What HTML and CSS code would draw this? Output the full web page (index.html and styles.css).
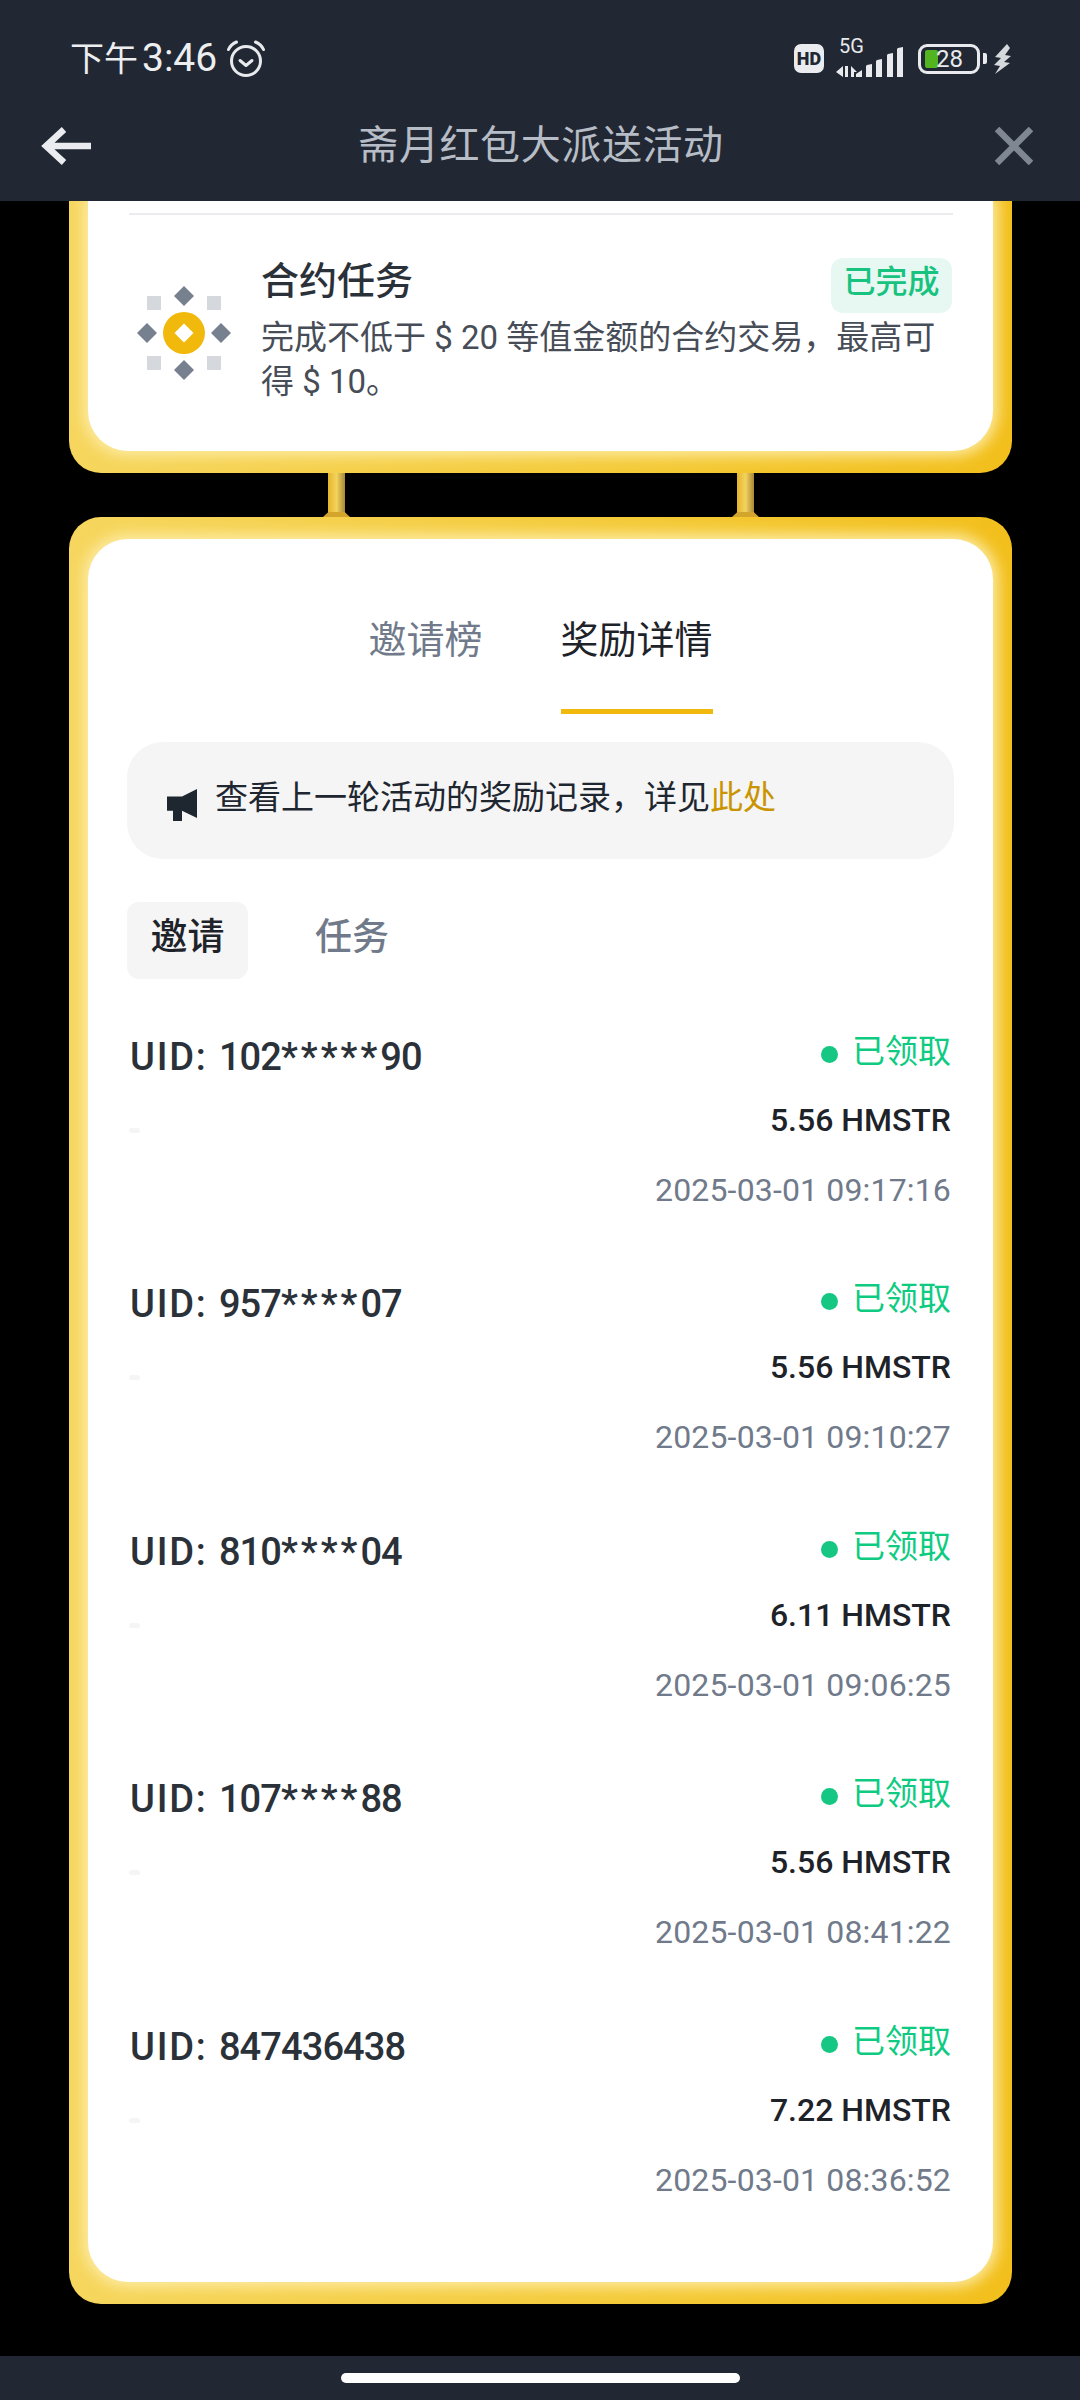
FILE: index.html
```html
<!DOCTYPE html>
<html lang="zh-CN">
<head>
<meta charset="utf-8">
<title>斋月红包大派送活动</title>
<link rel="stylesheet" href="styles.css">
</head>
<body>
<div class="page">
  <header class="header">
    <div class="status">
      <div class="status-left">
        <span class="clock"><span class="clock-cjk">下午</span>3:46</span>
        <svg class="alarm" viewBox="0 0 38 38" fill="none" stroke="#e8eaed">
          <circle cx="19" cy="21" r="14.5" stroke-width="3"/>
          <path d="M13 20.5l6 5 6-5" stroke-width="3" stroke-linecap="round" stroke-linejoin="round"/>
          <path d="M1.5 9.5C3 6 6 3.500 9.500 2M36.500 9.500C35 6 32 3.500 28.500 2" stroke-width="3" stroke-linecap="round"/>
        </svg>
      </div>
      <div class="status-right">
        <span class="hd">HD</span>
        <div class="net">
          <span class="fiveg">5G</span>
          <svg class="signal" viewBox="0 0 68 30" fill="#e8eaed">
            <path d="M0 25l7-6v11zM9 19h3v11H9zM15 19l6 6h-3v5h-3z"/>
            <path d="M20 30v-3l6-4v7zM30 30V19l1-1 5-1v13zM40 30V14l1-1 5-1v18zM51 30V8l1-1 5-1v24zM61 30V2l1-1 5-1v30z"/>
          </svg>
        </div>
        <div class="battery">
          <span class="battery-fill"></span>
          <span class="battery-num">28</span>
        </div>
        <span class="battery-nub"></span>
        <svg class="bolt" viewBox="0 0 18 30" fill="#d5d8dc">
          <path d="M13 0L1 13l6 1-7 7 6 1-5 8 15-11-6-1 7-6-6-1 5-7z"/>
        </svg>
      </div>
    </div>
    <nav class="nav">
      <svg class="back" viewBox="0 0 50 38" fill="none" stroke="#eaecef" stroke-width="6.500">
        <path d="M23 2.500L5 19l18 16.500M5 19h45"/>
      </svg>
      <h1 class="title">斋月红包大派送活动</h1>
      <svg class="close" viewBox="0 0 38 38" fill="none" stroke="#7f8792" stroke-width="6.500">
        <path d="M2 2l34 34M36 2L2 36"/>
      </svg>
    </nav>
  </header>

  <section class="frame frame-top">
    <div class="sheet sheet-top">
      <div class="divider"></div>
      <div class="task">
        <svg class="task-icon" viewBox="0 0 94 94">
          <g fill="#d5d8dc">
            <rect x="10" y="10" width="14" height="14"/>
            <rect x="70" y="10" width="14" height="14"/>
            <rect x="10" y="70" width="14" height="14"/>
            <rect x="70" y="70" width="14" height="14"/>
          </g>
          <g fill="#76808f">
            <path d="M47 0l10 10-10 10-10-10z"/>
            <path d="M47 74l10 10-10 10-10-10z"/>
            <path d="M10 37l10 10-10 10L0 47z"/>
            <path d="M84 37l10 10-10 10-10-10z"/>
          </g>
          <circle cx="47" cy="47" r="21" fill="#f0b90b"/>
          <path d="M47 37.500l9.500 9.500-9.500 9.500-9.500-9.500z" fill="#fff"/>
        </svg>
        <div class="task-body">
          <h2 class="task-title">合约任务</h2>
          <p class="task-desc">完成不低于 $ 20 等值金额的合约交易，最高可<br>得 $ 10。</p>
        </div>
        <span class="badge">已完成</span>
      </div>
    </div>
  </section>

  <div class="poles">
    <span class="pole"></span>
    <span class="pole"></span>
  </div>

  <section class="frame frame-main">
    <div class="sheet sheet-main">
      <div class="tabs">
        <span class="tab">邀请榜</span>
        <span class="tab tab-on">奖励详情</span>
      </div>
      <div class="notice">
        <svg class="horn" viewBox="0 0 30 32" fill="#1e2630">
          <path d="M0 7.500h15L30 0v29L15 21.700V32H6V21.700H0z"/>
        </svg>
        <span class="notice-text">查看上一轮活动的奖励记录，详见<a class="link">此处</a></span>
      </div>
      <div class="subtabs">
        <span class="subtab subtab-on">邀请</span>
        <span class="subtab">任务</span>
      </div>
      <ul class="rows">
        <li class="row">
          <div class="row-left"><span class="uid"><span class="uid-key">UID: </span>102<span class="mask">*****</span>90</span><span class="dash"></span></div>
          <div class="row-right"><span class="state">已领取</span><span class="amount">5.56 HMSTR</span><span class="date">2025-03-01 09:17:16</span></div>
        </li>
        <li class="row">
          <div class="row-left"><span class="uid"><span class="uid-key">UID: </span>957<span class="mask">****</span>07</span><span class="dash"></span></div>
          <div class="row-right"><span class="state">已领取</span><span class="amount">5.56 HMSTR</span><span class="date">2025-03-01 09:10:27</span></div>
        </li>
        <li class="row">
          <div class="row-left"><span class="uid"><span class="uid-key">UID: </span>810<span class="mask">****</span>04</span><span class="dash"></span></div>
          <div class="row-right"><span class="state">已领取</span><span class="amount">6.11 HMSTR</span><span class="date">2025-03-01 09:06:25</span></div>
        </li>
        <li class="row">
          <div class="row-left"><span class="uid"><span class="uid-key">UID: </span>107<span class="mask">****</span>88</span><span class="dash"></span></div>
          <div class="row-right"><span class="state">已领取</span><span class="amount">5.56 HMSTR</span><span class="date">2025-03-01 08:41:22</span></div>
        </li>
        <li class="row">
          <div class="row-left"><span class="uid"><span class="uid-key">UID: </span>847436438</span><span class="dash"></span></div>
          <div class="row-right"><span class="state">已领取</span><span class="amount">7.22 HMSTR</span><span class="date">2025-03-01 08:36:52</span></div>
        </li>
      </ul>
    </div>
  </section>

  <div class="spacer"></div>
  <footer class="homebar"><span class="indicator"></span></footer>
</div>
</body>
</html>
```

FILE: styles.css
```css
* { box-sizing: border-box; }
html, body { margin: 0; padding: 0; background: #000; }
body { font-family: Roboto, "Noto Sans CJK SC", sans-serif; color: #1e2329; }
h1, h2, p, ul { margin: 0; padding: 0; font-weight: inherit; font-size: inherit; }
ul { list-style: none; }

.page { width: 1080px; height: 2400px; display: flex; flex-direction: column; overflow: hidden; }

/* header */
.header { height: 201px; flex: none; background: #212833; display: flex; flex-direction: column; }
.status { height: 91px; padding: 26px 68px 0 70px; display: flex; justify-content: space-between; align-items: center; }
.status-left { display: flex; align-items: center; gap: 9px; }
.clock { font-size: 39px; line-height: 42px; color: #eceef0; }
.clock-cjk { font-size: 34px; margin-right: 4px; }
.alarm { width: 40px; height: 38px; }
.status-right { display: flex; align-items: center; }
.hd { width: 30px; height: 29px; border-radius: 7px; background: #eaecef; color: #212833; font-size: 18px; font-weight: 900; line-height: 29px; text-align: center; margin-right: 12px; }
.net { width: 68px; height: 36px; position: relative; margin-right: 14px; }
.fiveg { position: absolute; left: 3px; top: -6px; font-size: 20px; line-height: 22px; color: #e8eaed; }
.signal { position: absolute; left: 0; bottom: 0; width: 68px; height: 30px; }
.battery { width: 62px; height: 30px; border: 3px solid #e8eaed; border-radius: 9px; position: relative; }
.battery-fill { position: absolute; left: 4px; top: 3px; width: 13px; height: 18px; background: #52b51f; border-radius: 2px; }
.battery-num { position: absolute; left: 15px; top: 0; font-size: 24px; line-height: 24px; color: #e8eaed; }
.battery-nub { width: 4px; height: 11px; border-radius: 0 2px 2px 0; background: #e8eaed; margin-left: 3px; }
.bolt { width: 18px; height: 30px; margin-left: 7px; }
.nav { height: 110px; padding: 0 47px 0 41px; display: flex; align-items: center; }
.back { width: 50px; height: 38px; flex: none; }
.close { width: 38px; height: 38px; flex: none; }
.title { flex: 1; text-align: center; font-size: 40px; letter-spacing: 0.6px; line-height: 56px; color: #b7bdc6; padding-right: 4px; }

/* yellow frames */
.frame { margin: 0 68px 0 69px; padding: 22px 19px; background: linear-gradient(90deg, #f6d65e 0%, #f4ca38 60%, #f2bf1c 100%); border-radius: 32px; overflow: hidden; flex: none; }
.sheet { background: #fff; box-shadow: 0 0 14px 5px #fdeba4; border-radius: 40px; }
.frame-top { height: 272px; padding-top: 0; border-radius: 0 0 32px 32px; }
.sheet-top { height: 250px; padding: 12px 40px 0 37px; border-radius: 0 0 40px 40px; }
.divider { height: 2px; background: #eaecef; margin-left: 4px; }
.frame-main { height: 1787px; }
.sheet-main { height: 1743px; padding: 62px 39px 0; }

/* task */
.task { display: flex; align-items: flex-start; margin-top: 41px; position: relative; }
.task-icon { width: 94px; height: 94px; flex: none; margin: 30px 0 0 12px; }
.task-body { margin-left: 30px; }
.task-title { font-size: 38px; font-weight: 500; line-height: 50px; color: #2b3139; }
.task-desc { font-size: 33px; line-height: 44px; color: #474d57; margin-top: 10px; white-space: nowrap; }
.badge { position: absolute; right: 1px; top: 2px; width: 121px; height: 55px; border-radius: 12px; background: #e7f8f2; color: #18c27f; font-size: 32px; font-weight: 500; line-height: 48px; text-align: center; }

/* poles */
.poles { height: 44px; flex: none; padding-left: 328px; display: flex; gap: 392px; }
.pole { width: 17px; height: 44px; background: linear-gradient(90deg, #e6b52c 0%, #f3d35c 50%, #a98738 100%); position: relative; }
.pole::after { content: ""; position: absolute; left: -5px; bottom: 0; width: 27px; height: 5px; background: #d4a52c; clip-path: polygon(20% 0, 80% 0, 100% 100%, 0 100%); }

/* tabs */
.tabs { display: flex; justify-content: center; gap: 78px; }
.tab { font-size: 38px; line-height: 78px; color: #707a8a; padding-bottom: 30px; border-bottom: 5px solid transparent; }
.tab-on { color: #1e2329; border-bottom-color: #f0b90b; }

.notice { height: 117px; margin-top: 28px; border-radius: 36px; background: #f5f5f5; padding: 0 40px; display: flex; align-items: center; gap: 18px; font-size: 33px; color: #1e2630; }
.notice-text { padding-bottom: 12px; }
.horn { width: 30px; height: 32px; flex: none; margin-top: 9px; }
.link { color: #c99400; }

.subtabs { display: flex; gap: 67px; margin-top: 43px; }
.subtab { height: 77px; width: 121px; text-align: center; font-size: 37px; font-weight: 500; line-height: 72px; color: #707a8a; border-radius: 12px; }
.subtab-on { background: #f5f5f5; color: #1e2329; }
.subtab + .subtab { width: 74px; }

/* rows */
.rows { display: flex; flex-direction: column; gap: 42.4px; margin-top: 39px; padding: 0 3px 0 3px; }
.row { height: 205px; display: flex; justify-content: space-between; }
.row-left { display: flex; flex-direction: column; }
.uid { font-size: 38px; font-weight: 500; line-height: 78px; letter-spacing: -0.9px; color: #2b3139; }
.uid-key { letter-spacing: 1.8px; }
.mask { letter-spacing: 3px; }
.dash { width: 11px; height: 5px; border-radius: 3px; background: #f5f5f5; margin: 32px 0 0 -1px; }
.row-right { display: flex; flex-direction: column; align-items: flex-end; }
.state { font-size: 33px; line-height: 68px; color: #0ecb81; display: flex; align-items: center; gap: 14px; }
.state::before { content: ""; width: 17px; height: 17px; border-radius: 50%; background: #16c784; margin-top: 5px; }
.amount { font-size: 32px; font-weight: 500; line-height: 69px; color: #1e2329; }
.date { font-size: 32px; line-height: 70px; letter-spacing: 0.16px; color: #707a8a; }

/* bottom */
.spacer { height: 52px; flex: none; }
.homebar { height: 44px; flex: none; background: #212833; display: flex; justify-content: center; padding-top: 17px; }
.indicator { width: 399px; height: 10px; border-radius: 5px; background: #fff; }
```
